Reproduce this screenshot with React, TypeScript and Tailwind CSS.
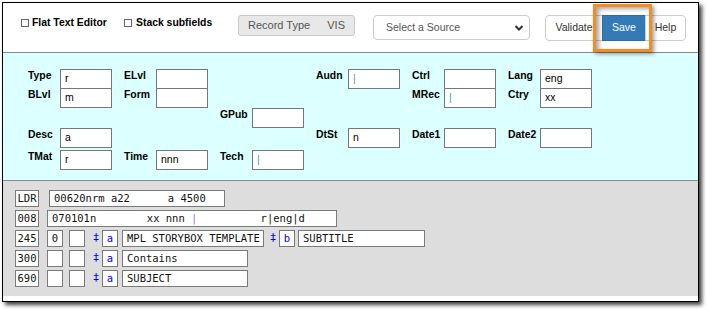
import React from "react"

const sans = { fontFamily: '"Liberation Sans", Arial, sans-serif' }
const mono = { fontFamily: '"DejaVu Sans Mono", "Liberation Mono", monospace' }

type FieldProps = { label: string; value?: string; cursor?: boolean; cls: string }

function Field({ label, value = "", cursor, cls }: FieldProps) {
  return (
    <div className={`flex items-start ${cls}`}>
      <span className="w-[32px] shrink-0 pt-[1px] text-[10.4px] leading-[12px] font-bold text-black">{label}</span>
      <div className="flex h-[20px] w-[53px] items-center border border-[#767676] bg-white px-[4px] text-[10.5px] text-black">
        {cursor ? <span className="text-[#4a8fd8]">|</span> : value}
      </div>
    </div>
  )
}

function Box({ w, children, center }: { w: string; children?: React.ReactNode; center?: boolean }) {
  return (
    <div
      className={`flex h-[17px] items-center border border-[#7a7a7a] bg-white whitespace-pre text-[10.5px] text-[#111] ${w} ${center ? "justify-center" : "pl-[4px]"}`}
      style={mono}
    >
      {children}
    </div>
  )
}

function Delim({ code, cls }: { code: string; cls: string }) {
  return (
    <>
      <span className={`w-[12px] text-center text-[11px] text-[#0000ff] ${cls}`} style={mono}>‡</span>
      <div className="flex h-[17px] w-[16px] items-center justify-center border border-[#7a7a7a] bg-white text-[10.5px] text-[#0000ff]" style={mono}>
        {code}
      </div>
    </>
  )
}

export default function App() {
  return (
    <div className="h-[310px] w-[707px] bg-white pl-[2px] pt-[2px]" style={sans}>
      <div className="relative flex h-[300px] w-[697px] flex-col border border-black bg-white shadow-[3px_3px_4px_rgba(0,0,0,0.75)]">
        {/* toolbar */}
        <div className="flex h-[50px] shrink-0 items-start border-b border-[#888] pl-[18px]">
          <label className="mt-[14px] flex w-[103px] items-center gap-[3px]">
            <span className="h-[8px] w-[8px] border border-[#666] bg-white" />
            <span className="text-[10.4px] leading-[12px] font-bold">Flat Text Editor</span>
          </label>
          <label className="mt-[14px] flex w-[114px] items-center gap-[4px]">
            <span className="h-[8px] w-[8px] border border-[#666] bg-white" />
            <span className="text-[10.4px] leading-[12px] font-bold">Stack subfields</span>
          </label>
          <div className="mt-[12px] flex h-[21px] w-[117px] items-center justify-between rounded-[3px] border border-[#c8c8c8] bg-[#e8e8e8] px-[9px] text-[11px] text-[#555]">
            <span>Record Type</span>
            <span>VIS</span>
          </div>
          <div className="ml-[18px] mt-[12px] flex h-[25px] w-[157px] items-center justify-between rounded-[4px] border border-[#ccc] bg-white pl-[12px] pr-[5px] text-[10.5px] text-[#555]">
            <span>Select a Source</span>
            <svg width="10" height="8" viewBox="0 0 10 8">
              <path d="M1.5 2 L5 5.5 L8.5 2" fill="none" stroke="#333" strokeWidth="2" />
            </svg>
          </div>
          <div className="ml-[15px] mt-[12px] flex h-[26px] text-[10.5px]">
            <div className="flex w-[58px] items-center justify-center rounded-l-[4px] border border-[#ccc] bg-white text-[#333]">Validate</div>
            <div className="-ml-px flex w-[44px] items-center justify-center border border-[#2e6da4] bg-[#337ab7] text-white">Save</div>
            <div className="-ml-px flex w-[41px] items-center justify-center rounded-r-[4px] border border-[#ccc] bg-white text-[#333]">Help</div>
          </div>
        </div>

        {/* fixed fields */}
        <div className="h-[128px] shrink-0 border-b border-[#888] bg-[#dcffff] pl-[25px] pt-[16px]">
          <div className="grid grid-cols-[repeat(6,84px)] grid-rows-[19px_20px_20px_22px_20px] gap-x-[12px]">
            <Field cls="col-start-1 row-start-1" label="Type" value="r" />
            <Field cls="col-start-2 row-start-1" label="ELvl" />
            <Field cls="col-start-4 row-start-1" label="Audn" cursor />
            <Field cls="col-start-5 row-start-1" label="Ctrl" />
            <Field cls="col-start-6 row-start-1" label="Lang" value="eng" />
            <Field cls="col-start-1 row-start-2" label="BLvl" value="m" />
            <Field cls="col-start-2 row-start-2" label="Form" />
            <Field cls="col-start-5 row-start-2" label="MRec" cursor />
            <Field cls="col-start-6 row-start-2" label="Ctry" value="xx" />
            <Field cls="col-start-3 row-start-3" label="GPub" />
            <Field cls="col-start-1 row-start-4" label="Desc" value="a" />
            <Field cls="col-start-4 row-start-4" label="DtSt" value="n" />
            <Field cls="col-start-5 row-start-4" label="Date1" />
            <Field cls="col-start-6 row-start-4" label="Date2" />
            <Field cls="col-start-1 row-start-5" label="TMat" value="r" />
            <Field cls="col-start-2 row-start-5" label="Time" value="nnn" />
            <Field cls="col-start-3 row-start-5" label="Tech" cursor />
          </div>
        </div>

        {/* variable fields */}
        <div className="flex h-[115px] shrink-0 flex-col gap-[3px] bg-[#dddddd] pl-[12px] pt-[9px]">
          <div className="flex">
            <Box w="w-[24px]" center>LDR</Box>
            <div className="ml-[10px]"><Box w="w-[176px]">00620nrm a22      a 4500</Box></div>
          </div>
          <div className="flex">
            <Box w="w-[24px]" center>008</Box>
            <div className="ml-[8px]">
              <Box w="w-[290px]">
                070101n        xx nnn <span className="text-[#7b7bff]">|</span>          r|eng|d
              </Box>
            </div>
          </div>
          <div className="flex">
            <Box w="w-[24px]" center>245</Box>
            <div className="ml-[8px]"><Box w="w-[16px]" center>0</Box></div>
            <div className="ml-[6px]"><Box w="w-[16px]" center /></div>
            <Delim code="a" cls="ml-[5px]" />
            <div className="ml-[4px]"><Box w="w-[142px]">MPL STORYBOX TEMPLATE</Box></div>
            <Delim code="b" cls="ml-[3px]" />
            <div className="ml-[3px]"><Box w="w-[127px]">SUBTITLE</Box></div>
          </div>
          <div className="flex">
            <Box w="w-[24px]" center>300</Box>
            <div className="ml-[8px]"><Box w="w-[16px]" center /></div>
            <div className="ml-[6px]"><Box w="w-[16px]" center /></div>
            <Delim code="a" cls="ml-[5px]" />
            <div className="ml-[4px]"><Box w="w-[126px]">Contains</Box></div>
          </div>
          <div className="flex">
            <Box w="w-[24px]" center>690</Box>
            <div className="ml-[8px]"><Box w="w-[16px]" center /></div>
            <div className="ml-[6px]"><Box w="w-[16px]" center /></div>
            <Delim code="a" cls="ml-[5px]" />
            <div className="ml-[4px]"><Box w="w-[126px]">SUBJECT</Box></div>
          </div>
        </div>

        {/* callout around Save */}
        <div className="absolute left-[590px] top-[1px] h-[48px] w-[59px] border-[3px] border-[#f68b1f] shadow-[2px_2px_4px_rgba(0,0,0,0.4),inset_3px_2px_4px_rgba(0,0,0,0.35)]" />
      </div>
    </div>
  )
}
